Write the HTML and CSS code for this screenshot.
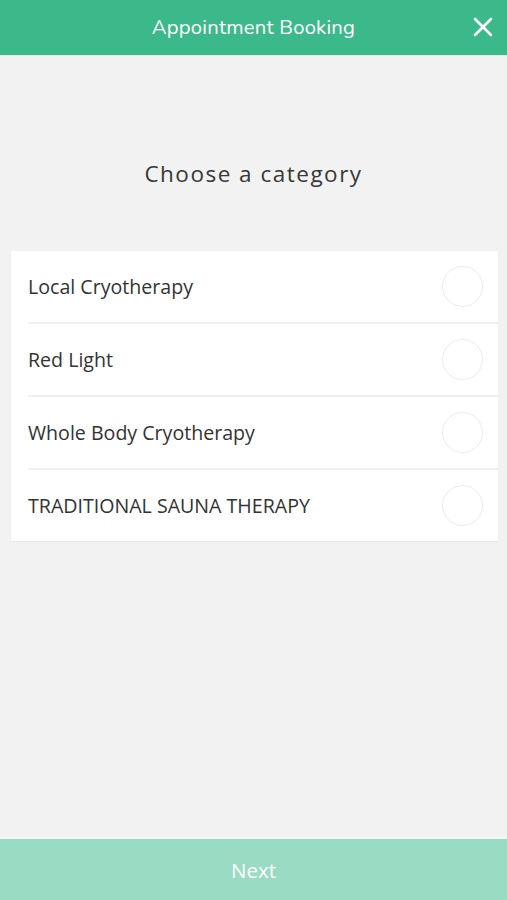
FILE: index.html
```html
<!DOCTYPE html>
<html>
<head>
<meta charset="utf-8">
<link rel="stylesheet" href="styles.css">
</head>
<body>
<div class="app">
  <header class="topbar">
    <div class="title">Appointment Booking</div>
    <button class="close" aria-label="Close">
      <svg width="20" height="20" viewBox="0 0 20 20"><path d="M2 2 L18 18 M18 2 L2 18" stroke="#fff" stroke-width="2.6" stroke-linecap="round" fill="none"/></svg>
    </button>
  </header>
  <main class="content">
    <h1 class="heading">Choose a category</h1>
    <ul class="card">
      <li class="row"><span class="label">Local Cryotherapy</span><span class="radio"></span></li>
      <li class="row"><span class="label">Red Light</span><span class="radio"></span></li>
      <li class="row"><span class="label">Whole Body Cryotherapy</span><span class="radio"></span></li>
      <li class="row"><span class="label">TRADITIONAL SAUNA THERAPY</span><span class="radio"></span></li>
    </ul>
  </main>
  <footer class="footer">
    <button class="next">Next</button>
  </footer>
</div>
</body>
</html>
```
FILE: styles.css
```css
* { box-sizing: border-box; }
html, body { margin: 0; padding: 0; height: 100%; }
body { background: #f2f2f2; font-family: "Open Sans", "Noto Sans", sans-serif; color: #333; }
.app { display: flex; flex-direction: column; height: 900px; }
.topbar {
  height: 56px; flex: none;
  background: #3bb98a;
  border-bottom: 1px solid #d9efe6;
  display: flex; align-items: center; justify-content: center;
  position: relative;
}
.title { color: #fff; font-family: "Nunito", "Lato", "Open Sans", sans-serif; font-size: 20.3px; letter-spacing: 0.2px; margin-top: -2px; }
.close {
  position: absolute; right: 14px; top: 17px;
  background: none; border: 0; padding: 0; width: 20px; height: 20px; cursor: pointer;
}
.close svg { display: block; }
.content { flex: 1; display: flex; flex-direction: column; }
.heading {
  margin: 100px 0 0; height: 36px;
  text-align: center; font-weight: 400; font-size: 22.5px; letter-spacing: 1.5px; color: #383838;
  line-height: 36px;
}
.card {
  list-style: none; margin: 59px 9px 0 11px; padding: 0;
  background: #fff;
  box-shadow: 0 1px 1px rgba(0,0,0,0.04);
}
.row {
  height: 73px; margin-left: 17px; padding-right: 15px;
  display: flex; align-items: center; justify-content: space-between;
  border-bottom: 2px solid #f0f0f0;
}
.row:last-child { border-bottom: 0; height: 71px; }
.label { font-size: 19.6px; color: #333; }
.radio { width: 41px; height: 41px; border: 1.5px solid #ececec; border-radius: 50%; }
.footer { flex: none; height: 63px; border-top: 2px solid #f7f7f7; background: #9adcc3; }
.next {
  width: 100%; height: 61px; border: 0; background: #9adcc3;
  color: #fff; font-family: "Open Sans", sans-serif; font-size: 20.5px; cursor: pointer;
}
```
